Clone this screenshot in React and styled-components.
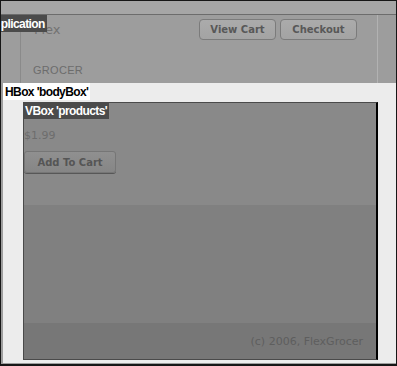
import React from "react";
import styled, { createGlobalStyle } from "styled-components";

const GlobalStyle = createGlobalStyle`
  html, body {
    margin: 0;
    padding: 0;
    background: #ffffff;
  }
`;

const Screen = styled.div`
  position: relative;
  box-sizing: border-box;
  width: 397px;
  height: 366px;
  border: 1px solid #161616;
  border-bottom-width: 2px;
  background: #9d9d9d;
  overflow: hidden;
  display: flex;
  flex-direction: column;
  font-family: "DejaVu Sans", Verdana, sans-serif;
`;

const TopStrip = styled.div`
  height: 13px;
  flex: none;
  background: #a6a6a6;
  border-bottom: 1px solid #6c6c6c;
`;

const Header = styled.div`
  height: 68px;
  flex: none;
  display: flex;
  padding-left: 19px;
`;

const HeaderBox = styled.div`
  box-sizing: border-box;
  width: 358px;
  border-left: 1px solid #8a8a8a;
  border-right: 1px solid #b2b2b2;
  display: flex;
  justify-content: space-between;
  padding: 4px 20px 0 12px;
`;

const Logo = styled.div`
  display: flex;
  flex-direction: column;
  color: #727272;
`;

const LogoTop = styled.span`
  font-size: 13px;
  line-height: 14px;
  margin-top: 4px;
  margin-left: 1px;
`;

const LogoBottom = styled.span`
  font-family: "Liberation Sans", Arial, sans-serif;
  font-size: 11px;
  letter-spacing: 0.3px;
  margin-top: 27px;
  color: #6c6c6c;
`;

const ButtonRow = styled.div`
  display: flex;
  gap: 4px;
  align-items: flex-start;
`;

const Button = styled.button`
  box-sizing: border-box;
  width: ${(p) => p.$w || 77}px;
  height: ${(p) => p.$h || 21}px;
  padding: 0;
  border: 1px solid ${(p) => p.$border || "#7b7b7b"};
  border-radius: 4px;
  background: ${(p) => p.$bg || "linear-gradient(#ababab, #a3a3a3)"};
  color: #585858;
  font-family: "DejaVu Sans", Verdana, sans-serif;
  font-weight: bold;
  font-size: 10px;
  cursor: pointer;
`;

const Tag = styled.div`
  position: absolute;
  top: ${(p) => p.$top || 0}px;
  left: ${(p) => p.$left || 0}px;
  height: 17px;
  padding: 0 2px;
  background: ${(p) => (p.$light ? "#ffffff" : "#4b4b4b")};
  color: ${(p) => (p.$light ? "#000000" : "#ffffff")};
  font-family: "Liberation Sans", Arial, sans-serif;
  font-weight: bold;
  font-size: 12px;
  letter-spacing: -0.6px;
  line-height: 18px;
  white-space: nowrap;
  z-index: 2;
`;

const BodyPanel = styled.div`
  position: relative;
  flex: none;
  box-sizing: border-box;
  height: 280px;
  margin-left: 2px;
  margin-bottom: 1px;
  padding: 19px 18px 3px 20px;
  background: #ececec;
  display: flex;
`;

const Products = styled.div`
  position: relative;
  box-sizing: border-box;
  width: 355px;
  display: flex;
  flex-direction: column;
  border: 1px solid #4a4a4a;
  border-right: 2px solid #000000;
  background: #808080;
`;

const ProductItem = styled.div`
  height: 102px;
  flex: none;
  background: #898989;
  padding-top: 26px;
  box-sizing: border-box;
  display: flex;
  flex-direction: column;
  align-items: flex-start;
`;

const Price = styled.span`
  font-size: 11px;
  line-height: 13px;
  color: #6d6d6d;
  margin-bottom: 9px;
`;

const CartButton = styled(Button)`
  border-color: #767676;
  border-radius: 3px;
  box-shadow: 0 1px 0 #575757;
  color: #555555;
`;

const Spacer = styled.div`
  flex: 1;
  background: #808080;
`;

const Footer = styled.div`
  height: 36px;
  flex: none;
  background: #777777;
  display: flex;
  align-items: center;
  justify-content: flex-end;
  padding-right: 13px;
  font-size: 11px;
  color: #5e5e5e;
`;

export default function App() {
  return (
    <>
      <GlobalStyle />
      <Screen>
        <Tag $top={14} $left={-17}>
          Application
        </Tag>
        <TopStrip />
        <Header>
          <HeaderBox>
            <Logo>
              <LogoTop>Flex</LogoTop>
              <LogoBottom>GROCER</LogoBottom>
            </Logo>
            <ButtonRow>
              <Button>View Cart</Button>
              <Button>Checkout</Button>
            </ButtonRow>
          </HeaderBox>
        </Header>
        <BodyPanel>
          <Tag $light>HBox 'bodyBox'</Tag>
          <Products>
            <Tag $top={-1} $left={-1}>
              VBox 'products'
            </Tag>
            <ProductItem>
              <Price>$1.99</Price>
              <CartButton $w={92} $h={22} $bg="linear-gradient(#909090, #868686)">
                Add To Cart
              </CartButton>
            </ProductItem>
            <Spacer />
            <Footer>(c) 2006, FlexGrocer</Footer>
          </Products>
        </BodyPanel>
      </Screen>
    </>
  );
}
